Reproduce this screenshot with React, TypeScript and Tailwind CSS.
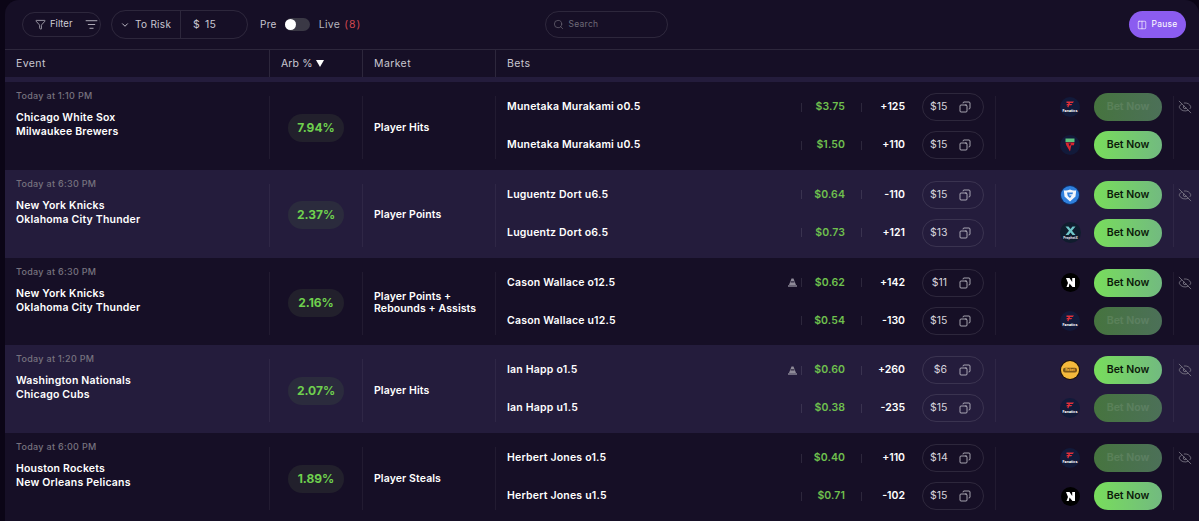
import { Copy, EyeOff, ListFilter, Search, ChevronDown, Funnel, Columns2 } from "lucide-react";

type Logo = "fanatics" | "fanaticsAlt" | "fanduel" | "prophet" | "novig" | "rebet";

type Bet = {
  name: string;
  cone?: boolean;
  profit: string;
  odds: string;
  stake: string;
  logo: Logo;
  disabled?: boolean;
};

type Row = {
  time: string;
  teams: [string, string];
  arb: string;
  market: string[];
  bets: [Bet, Bet];
};

const rows: Row[] = [
  {
    time: "Today at 1:10 PM",
    teams: ["Chicago White Sox", "Milwaukee Brewers"],
    arb: "7.94%",
    market: ["Player Hits"],
    bets: [
      { name: "Munetaka Murakami o0.5", profit: "$3.75", odds: "+125", stake: "$15", logo: "fanatics", disabled: true },
      { name: "Munetaka Murakami u0.5", profit: "$1.50", odds: "+110", stake: "$15", logo: "fanaticsAlt" },
    ],
  },
  {
    time: "Today at 6:30 PM",
    teams: ["New York Knicks", "Oklahoma City Thunder"],
    arb: "2.37%",
    market: ["Player Points"],
    bets: [
      { name: "Luguentz Dort u6.5", profit: "$0.64", odds: "-110", stake: "$15", logo: "fanduel" },
      { name: "Luguentz Dort o6.5", profit: "$0.73", odds: "+121", stake: "$13", logo: "prophet" },
    ],
  },
  {
    time: "Today at 6:30 PM",
    teams: ["New York Knicks", "Oklahoma City Thunder"],
    arb: "2.16%",
    market: ["Player Points +", "Rebounds + Assists"],
    bets: [
      { name: "Cason Wallace o12.5", cone: true, profit: "$0.62", odds: "+142", stake: "$11", logo: "novig" },
      { name: "Cason Wallace u12.5", profit: "$0.54", odds: "-130", stake: "$15", logo: "fanatics", disabled: true },
    ],
  },
  {
    time: "Today at 1:20 PM",
    teams: ["Washington Nationals", "Chicago Cubs"],
    arb: "2.07%",
    market: ["Player Hits"],
    bets: [
      { name: "Ian Happ o1.5", cone: true, profit: "$0.60", odds: "+260", stake: "$6", logo: "rebet" },
      { name: "Ian Happ u1.5", profit: "$0.38", odds: "-235", stake: "$15", logo: "fanatics", disabled: true },
    ],
  },
  {
    time: "Today at 6:00 PM",
    teams: ["Houston Rockets", "New Orleans Pelicans"],
    arb: "1.89%",
    market: ["Player Steals"],
    bets: [
      { name: "Herbert Jones o1.5", profit: "$0.40", odds: "+110", stake: "$14", logo: "fanatics", disabled: true },
      { name: "Herbert Jones u1.5", profit: "$0.71", odds: "-102", stake: "$15", logo: "novig" },
    ],
  },
];

function BookLogo({ kind }: { kind: Logo }) {
  if (kind === "fanatics") {
    return (
      <svg width="20" height="20" viewBox="0 0 20 20">
        <circle cx="10" cy="10" r="10" fill="#121a3a" />
        <path d="M6.5 4.5h7.5l-1.2 1.5H10l-.3.9h2.6l-1 1.3H9.200l-.9 2.200-1.100-.6.700-1.600H6.200l.8-1.300h1.100l.4-1H6.500z" fill="#e2303a" />
        <text x="10" y="14.500" textAnchor="middle" fontSize="3.6" fontWeight="700" fill="#fff">Fanatics</text>
      </svg>
    );
  }
  if (kind === "fanaticsAlt") {
    return (
      <svg width="20" height="20" viewBox="0 0 20 20">
        <circle cx="10" cy="10" r="10" fill="#121a3a" />
        <rect x="5.500" y="3.500" width="9" height="3.500" fill="#5cc47e" />
        <path d="M5.500 7.500h9l-.6 2.800h-2.600L10 16.500 6.300 10.300z" fill="#d8262f" />
        <path d="M8.500 8.500h2.500L9.800 11.500z" fill="#121a3a" />
      </svg>
    );
  }
  if (kind === "fanduel") {
    return (
      <svg width="20" height="20" viewBox="0 0 20 20">
        <circle cx="10" cy="10" r="10" fill="#0f2c63" />
        <circle cx="10" cy="10" r="9" fill="#2f7fdc" />
        <path d="M3.800 5.200c2 .6 4 .3 6.200-.8 2.200 1.100 4.200 1.400 6.200.8l-.7 6.200L10 16.500l-5.500-5.100z" fill="#f2f6fc" />
        <path d="M7 7.500h6l-.5 1.700h-3l-.2 1.200h2.400L10 13 7.800 11z" fill="#2f7fdc" />
      </svg>
    );
  }
  if (kind === "prophet") {
    return (
      <svg width="21" height="21" viewBox="0 0 21 21">
        <circle cx="10.500" cy="10.500" r="10.500" fill="#101d2e" />
        <path d="M5.500 4.500h3l2 2.600 2-2.600h3l-3.500 4.200 3.500 4.300h-3l-2-2.600-2 2.600h-3L9 8.700z" fill="#6fc6c8" />
        <text x="10.500" y="16.800" textAnchor="middle" fontSize="3.200" fontWeight="700" fill="#e5e7eb">ProphetX</text>
      </svg>
    );
  }
  if (kind === "novig") {
    return (
      <svg width="19" height="19" viewBox="0 0 19 19">
        <circle cx="9.500" cy="9.500" r="9.500" fill="#000" />
        <path d="M5 5h3.500l2.700 4V5h2.800v9h-2.500L8.500 10.500 7.800 14H5.500L7 10z" fill="#fff" />
      </svg>
    );
  }
  return (
    <svg width="20" height="20" viewBox="0 0 20 20">
      <circle cx="10" cy="10" r="10" fill="#1c1208" />
      <circle cx="10" cy="10" r="9" fill="#f4b93c" />
      <rect x="3" y="7.800" width="14" height="4.600" rx="2" fill="#7d5818" />
      <text x="10" y="11.400" textAnchor="middle" fontSize="3.400" fontWeight="700" fill="#f4b93c">Rebet</text>
    </svg>
  );
}

function Cone() {
  return (
    <svg width="9" height="9" viewBox="0 0 9 9" className="text-[#8f8b99]">
      <path d="M3.500 0.500h2L8 7H1z" fill="currentColor" />
      <rect x="0" y="7.300" width="9" height="1.400" fill="currentColor" />
      <rect x="2.600" y="3.400" width="3.800" height="1" fill="#17102a" />
    </svg>
  );
}

function BetLine({ bet }: { bet: Bet }) {
  return (
    <div className="flex h-7 items-center">
      <span className="w-[287px] pl-[11px] text-[10.5px] font-semibold tracking-[0.2px] text-white">{bet.name}</span>
      <span className="flex w-[18px] justify-center">{bet.cone && <Cone />}</span>
      <span className="h-[9px] w-px bg-white/10" />
      <span className="w-[43px] text-right text-[10.5px] font-semibold tracking-[0.1px] text-[#6fc04e]">{bet.profit}</span>
      <span className="ml-4 h-[9px] w-px bg-white/10" />
      <span className="w-[43px] text-right text-[10.5px] font-semibold text-white">{bet.odds}</span>
      <div className="ml-[17px] flex h-7 w-[62px] items-center justify-between rounded-full border border-white/10 pr-3 pl-[7px] text-[10.5px] text-[#d6d4dc]">
        <span className="w-[17px] text-right">{bet.stake}</span>
        <Copy size={12} strokeWidth={1.5} className="-scale-x-100" />
      </div>
    </div>
  );
}

function BookAction({ bet }: { bet: Bet }) {
  return (
    <div className="flex h-7 items-center justify-end">
      <span className="mr-3 flex w-6 justify-center">
        <BookLogo kind={bet.logo} />
      </span>
      {bet.disabled ? (
        <button className="h-7 w-[68px] rounded-full bg-[linear-gradient(90deg,#46743f,#4c7058)] text-[10.5px] font-semibold text-white/10">
          Bet Now
        </button>
      ) : (
        <button className="h-7 w-[68px] rounded-full bg-[linear-gradient(90deg,#78dd5c,#72ba80)] text-[10.5px] font-semibold text-[#0c1a0a]">
          Bet Now
        </button>
      )}
    </div>
  );
}

function TableRow({ row, alt }: { row: Row; alt: boolean }) {
  return (
    <div className={`grid h-[87.75px] grid-cols-[264px_93px_133px_1fr] pt-[14px] pb-[12px] ${alt ? "bg-[#241c3c]" : "bg-[#160f26]"}`}>
      <div className="pl-[11px]">
        <div className="-mt-[6px] text-[9px] leading-3 font-medium tracking-[0.3px] text-[#77737f]">{row.time}</div>
        <div className="mt-[9px] text-[10.5px] leading-[14px] font-semibold tracking-[0.2px] text-white">
          <div>{row.teams[0]}</div>
          <div>{row.teams[1]}</div>
        </div>
      </div>
      <div className="flex items-center justify-center border-l border-white/5">
        <span className={`flex h-7 w-[56px] items-center justify-center rounded-full text-[12px] font-bold text-[#6fd04e] ${alt ? "bg-[#2b2b3d]" : "bg-[#22202c]"}`}>
          {row.arb}
        </span>
      </div>
      <div className="flex flex-col justify-center border-l border-white/5 pl-[11px] text-[10.5px] leading-[12px] font-semibold tracking-[0.1px] text-white">
        {row.market.map((m) => (
          <div key={m}>{m}</div>
        ))}
      </div>
      <div className="flex border-l border-white/5">
        <div className="-mt-[3px] flex h-[66px] w-[499px] flex-col gap-[10px]">
          <BetLine bet={row.bets[0]} />
          <BetLine bet={row.bets[1]} />
        </div>
        <div className="w-[178px] border-l border-white/5 pr-[11px]">
          <div className="-mt-[3px] flex h-[66px] flex-col gap-[10px]">
            <BookAction bet={row.bets[0]} />
            <BookAction bet={row.bets[1]} />
          </div>
        </div>
        <div className="border-l border-white/5 pt-[4px] pl-[4px]">
          <EyeOff size={14} strokeWidth={1.4} className="text-[#7e7a88]" />
        </div>
      </div>
    </div>
  );
}

export default function App() {
  return (
    <div className="h-[521px] w-[1199px] overflow-hidden bg-[#0b0516] pl-[5px] font-['Inter',sans-serif]">
      <div className="h-full overflow-hidden rounded-t-[14px] bg-[#160f26]">
        <div className="flex h-[50px] items-center border-b border-white/10 pl-[17px] text-[10.5px] tracking-[0.3px]">
          <div className="flex h-[25px] w-[79px] items-center rounded-full border border-white/10 pl-3 text-[#cfcdd6]">
            <Funnel size={11} strokeWidth={1.5} />
            <span className="ml-[4px] text-[9.5px] tracking-normal">Filter</span>
            <ListFilter size={13} strokeWidth={1.5} className="mr-[2px] ml-auto" />
          </div>
          <div className="ml-[10px] flex h-[29px] w-[137px] items-center rounded-full border border-white/10 text-[#c9c7d1]">
            <div className="flex h-full w-[69px] items-center border-r border-white/10 pl-2">
              <ChevronDown size={10} strokeWidth={2.2} />
              <span className="ml-[5px] text-[10px]">To Risk</span>
            </div>
            <span className="ml-3">$</span>
            <span className="ml-[5px]">15</span>
          </div>
          <span className="ml-3 text-[10px] text-[#c9c7d1]">Pre</span>
          <div className="ml-2 flex h-[13px] w-[25px] items-center rounded-full bg-[#3a3845]">
            <span className="h-[11px] w-[11px] rounded-full bg-white" />
          </div>
          <span className="ml-[9px] text-[#b7b5bf]">Live</span>
          <span className="ml-1 tracking-[1px] text-[#d2474f]">(8)</span>
          <div className="ml-[184px] flex h-[27px] w-[123px] items-center rounded-full border border-white/10 pl-[7px] text-[#6f6b78]">
            <Search size={11} strokeWidth={1.5} />
            <span className="ml-[4px] text-[8.5px]">Search</span>
          </div>
          <button className="mr-[13px] ml-auto flex h-[27px] w-[57px] items-center justify-center gap-[4px] rounded-full bg-[#8b5cf0] text-[8.5px] text-white">
            <Columns2 size={10} strokeWidth={1.6} />
            Pause
          </button>
        </div>
        <div className="grid h-[27px] grid-cols-[264px_93px_133px_1fr] items-center text-[10.5px] tracking-[0.4px] text-[#c9c7d1]">
          <div className="pl-[11px]">Event</div>
          <div className="flex h-full items-center gap-[3px] border-l border-white/10 pl-[11px] tracking-[0.1px]">
            Arb %
            <svg width="8" height="7" viewBox="0 0 8 7">
              <path d="M0 0h8L4 7z" fill="#fff" />
            </svg>
          </div>
          <div className="flex h-full items-center border-l border-white/10 pl-[11px]">Market</div>
          <div className="flex h-full items-center border-l border-white/10 pl-[11px]">Bets</div>
        </div>
        <div className="h-[5px] bg-[#241c3c]" />
        {rows.map((row, i) => (
          <TableRow key={i} row={row} alt={i % 2 === 1} />
        ))}
      </div>
    </div>
  );
}
